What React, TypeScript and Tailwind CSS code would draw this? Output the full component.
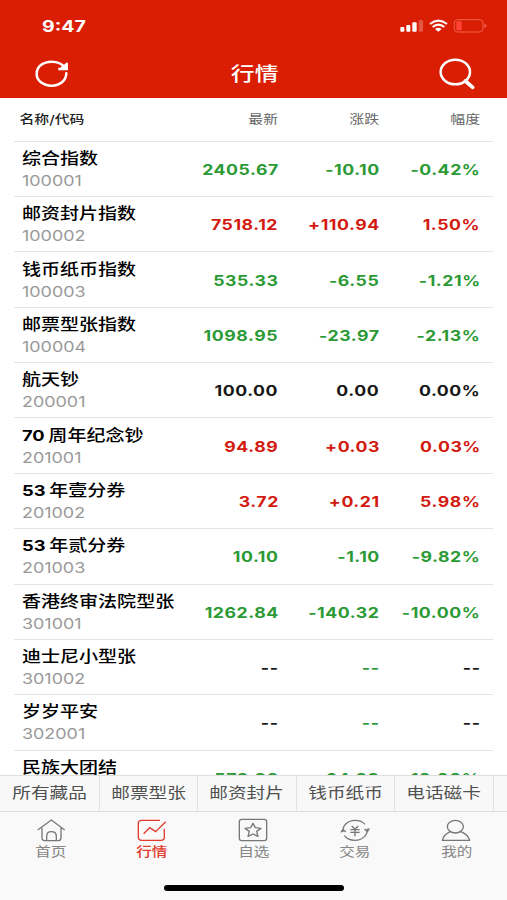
import React from "react";
import clsx from "clsx";

type Tone = "up" | "down" | "flat";
type Row = { prefix?: string; name: string; code?: string; last: string; change: string; pct: string; tone: Tone; muted?: boolean };

const ROWS: Row[] = [
  { name: "综合指数", code: "100001", last: "2405.67", change: "-10.10", pct: "-0.42%", tone: "down" },
  { name: "邮资封片指数", code: "100002", last: "7518.12", change: "+110.94", pct: "1.50%", tone: "up" },
  { name: "钱币纸币指数", code: "100003", last: "535.33", change: "-6.55", pct: "-1.21%", tone: "down" },
  { name: "邮票型张指数", code: "100004", last: "1098.95", change: "-23.97", pct: "-2.13%", tone: "down" },
  { name: "航天钞", code: "200001", last: "100.00", change: "0.00", pct: "0.00%", tone: "flat" },
  { prefix: "70", name: "周年纪念钞", code: "201001", last: "94.89", change: "+0.03", pct: "0.03%", tone: "up" },
  { prefix: "53", name: "年壹分券", code: "201002", last: "3.72", change: "+0.21", pct: "5.98%", tone: "up" },
  { prefix: "53", name: "年贰分券", code: "201003", last: "10.10", change: "-1.10", pct: "-9.82%", tone: "down" },
  { name: "香港终审法院型张", code: "301001", last: "1262.84", change: "-140.32", pct: "-10.00%", tone: "down" },
  { name: "迪士尼小型张", code: "301002", last: "--", change: "--", pct: "--", tone: "flat", muted: true },
  { name: "岁岁平安", code: "302001", last: "--", change: "--", pct: "--", tone: "flat", muted: true },
  { name: "民族大团结", last: "578.98", change: "-64.33", pct: "-10.00%", tone: "down" },
];

const TONES: Record<Tone, string> = { up: "text-[#d31a10]", down: "text-[#2b9a35]", flat: "text-[#171717]" };

const TABS = ["所有藏品", "邮票型张", "邮资封片", "钱币纸币", "电话磁卡"];

function Value({ text, tone }: { text: string; tone: Tone }) {
  return (
    <div className="flex justify-end">
      <span className={clsx("-mr-[0.5px] origin-right scale-x-[1.22] whitespace-nowrap text-[14.5px] font-bold leading-5 tracking-[0.45px]", TONES[tone])}>
        {text}
      </span>
    </div>
  );
}

function MarketRow({ row }: { row: Row }) {
  return (
    <div className="mx-[14px] grid h-[55.36px] shrink-0 grid-cols-[163px_101px_101px_101px] items-center border-b border-[#e4e4e4] pt-[2px]">
      <div className="flex h-[44px] flex-col items-start pl-[7.5px]">
        <span className="flex origin-left scale-x-[1.22] items-center gap-[3px] whitespace-nowrap text-[15.6px] font-medium leading-[22px] text-black">
          {row.prefix && <b className="text-[15px] font-bold">{row.prefix}</b>}
          {row.name}
        </span>
        {row.code && <span className="origin-left scale-x-[1.22] text-[14.7px] leading-[22px] text-[#999]">{row.code}</span>}
      </div>
      <Value text={row.last} tone={row.tone} />
      <Value text={row.change} tone={row.muted ? "down" : row.tone} />
      <Value text={row.pct} tone={row.tone} />
    </div>
  );
}

function StatusIcons() {
  return (
    <svg width="90" height="16" viewBox="434 54 270 48" fill="none">
      <g fill="#fff">
        <rect x="438" y="81" width="12" height="14" rx="3" />
        <rect x="456" y="75" width="12" height="20" rx="3" />
        <rect x="474" y="67" width="13" height="28" rx="3" />
        <rect x="493" y="60" width="13" height="35" rx="3" opacity=".25" />
      </g>
      <path d="M527 72Q552 52 578 72M535 81Q552 67 570 81" stroke="#fff" strokeWidth="6.5" />
      <path d="M542 87Q552 79 562 87L552 95Z" fill="#fff" />
      <rect x="600" y="59" width="86" height="37" rx="10" stroke="#f0604d" strokeWidth="3" />
      <path d="M690 71Q697 73 697 77.500Q697 82 690 84Z" fill="#f0604d" />
      <rect x="606" y="64" width="16" height="27" rx="4" fill="#ff4437" />
    </svg>
  );
}

function RefreshIcon() {
  return (
    <svg width="36" height="30" viewBox="102 174 108 90" fill="none" stroke="#fff" strokeWidth="7.5">
      <path d="M199 217C198 239 180 254 155 254C129 254 110 239 110 218S129 182 155 182C173 182 187 189 195 200" strokeLinecap="round" />
      <path d="M200 185V204H175" strokeWidth="7" />
      <path d="M187 193L203 186V207H177Z" fill="#fff" stroke="none" />
    </svg>
  );
}

function SearchIcon() {
  return (
    <svg width="38" height="34" viewBox="550 168 114 102" fill="none" stroke="#fff">
      <ellipse cx="602" cy="213" rx="44" ry="37" strokeWidth="7.5" />
      <path d="M632 240L654 259" strokeWidth="11" strokeLinecap="round" />
    </svg>
  );
}

const navSvg = { width: 32, height: 24, fill: "none", stroke: "currentColor", strokeWidth: 4 } as const;

const NAV = [
  {
    label: "首页",
    icon: (
      <svg {...navSvg} viewBox="106 202 96 72">
        <path d="M114 238L155 208L195 238M127 232V261Q127 270 137 270H175Q184 270 184 261V232M141 270V257Q141 243 155 243Q170 243 170 257V270" />
      </svg>
    ),
  },
  {
    label: "行情",
    active: true,
    icon: (
      <svg {...navSvg} viewBox="409 202 96 72">
        <path d="M481 209H426Q416 209 416 218V260Q416 269 426 269H484Q494 269 494 260V234M432 249L450 231L468 243L498 213" />
      </svg>
    ),
  },
  {
    label: "自选",
    icon: (
      <svg {...navSvg} viewBox="-48 202 96 72">
        <rect x="-41" y="206" width="82" height="64" rx="7" />
        <path d="M0 218L7 231L24 233L11 242L15 257L0 250L-15 257L-11 242L-24 233L-7 231Z" strokeLinejoin="round" />
      </svg>
    ),
  },
  {
    label: "交易",
    icon: (
      <svg {...navSvg} viewBox="255 202 96 72">
        <path d="M267 244C264 225 282 209 303 209C316 209 327 214 333 221M261 245L267 236L275 244M340 234C342 253 325 269 303 269C289 269 277 263 271 255M332 235L340 243L346 233" />
        <path d="M293 226L303 235L313 226M289 237H317M289 245H317M303 235V257" />
      </svg>
    ),
  },
  {
    label: "我的",
    icon: (
      <svg {...navSvg} viewBox="560 202 96 72">
        <ellipse cx="606" cy="228" rx="24" ry="19" />
        <path d="M591 243C579 248 570 257 567 269H649C645 257 636 248 622 243" strokeLinejoin="round" />
      </svg>
    ),
  },
];

export default function App() {
  return (
    <div className="flex h-[900px] w-[507px] flex-col overflow-hidden bg-white font-['Inter','Noto_Sans_CJK_SC',sans-serif]">
      <header className="h-[97.5px] shrink-0 bg-[#da1e04] text-white">
        <div className="flex h-[50px] items-center justify-between pl-[42px] pr-[18px] pt-[2px]">
          <span className="origin-left scale-x-[1.22] text-[16px] font-bold leading-5">9:47</span>
          <StatusIcons />
        </div>
        <div className="grid h-[47px] grid-cols-3 items-center pl-[34px] pr-[31px]">
          <RefreshIcon />
          <span className="scale-x-[1.22] text-center text-[19.5px] font-medium leading-6">行情</span>
          <span className="justify-self-end"><SearchIcon /></span>
        </div>
      </header>

      <div className="mx-[14px] grid h-[44.2px] shrink-0 grid-cols-[163px_101px_101px_101px] items-center border-b border-[#e4e4e4] pt-[2px] text-[12.2px] text-[#666]">
        <span className="origin-left scale-x-[1.22] pl-[4.5px] font-medium text-[#222]">名称/代码</span>
        {["最新", "涨跌", "幅度"].map((h) => (
          <span key={h} className="origin-right scale-x-[1.22] text-right">{h}</span>
        ))}
      </div>

      <main className="flex min-h-0 flex-1 flex-col overflow-hidden">
        {ROWS.map((r) => <MarketRow key={r.name} row={r} />)}
      </main>

      <div className="flex h-[37.5px] shrink-0 overflow-hidden border-y border-[#dedede] bg-[#f8f8f8] pl-[1.3px]">
        {TABS.map((t) => (
          <div key={t} className="flex w-[98.5px] shrink-0 items-center justify-center border-r border-[#e2e2e2] pt-px">
            <span className="scale-x-[1.22] whitespace-nowrap text-[15.3px] text-[#505050]">{t}</span>
          </div>
        ))}
      </div>

      <nav className="flex h-[88px] shrink-0 flex-col items-center bg-[#f9f9f9]">
        <div className="grid h-[73px] w-full grid-cols-5">
          {NAV.map((n) => (
            <div key={n.label} className={clsx("flex flex-col items-center pt-[6px]", n.active ? "text-[#e23a2c]" : "text-[#777]")}>
              {n.icon}
              <span className={clsx("scale-x-[1.22] text-[12.8px] leading-5", n.active ? "font-medium" : "text-[#858585]")}>{n.label}</span>
            </div>
          ))}
        </div>
        <div className="h-[6px] w-[180px] rounded-full bg-black" />
      </nav>
    </div>
  );
}
